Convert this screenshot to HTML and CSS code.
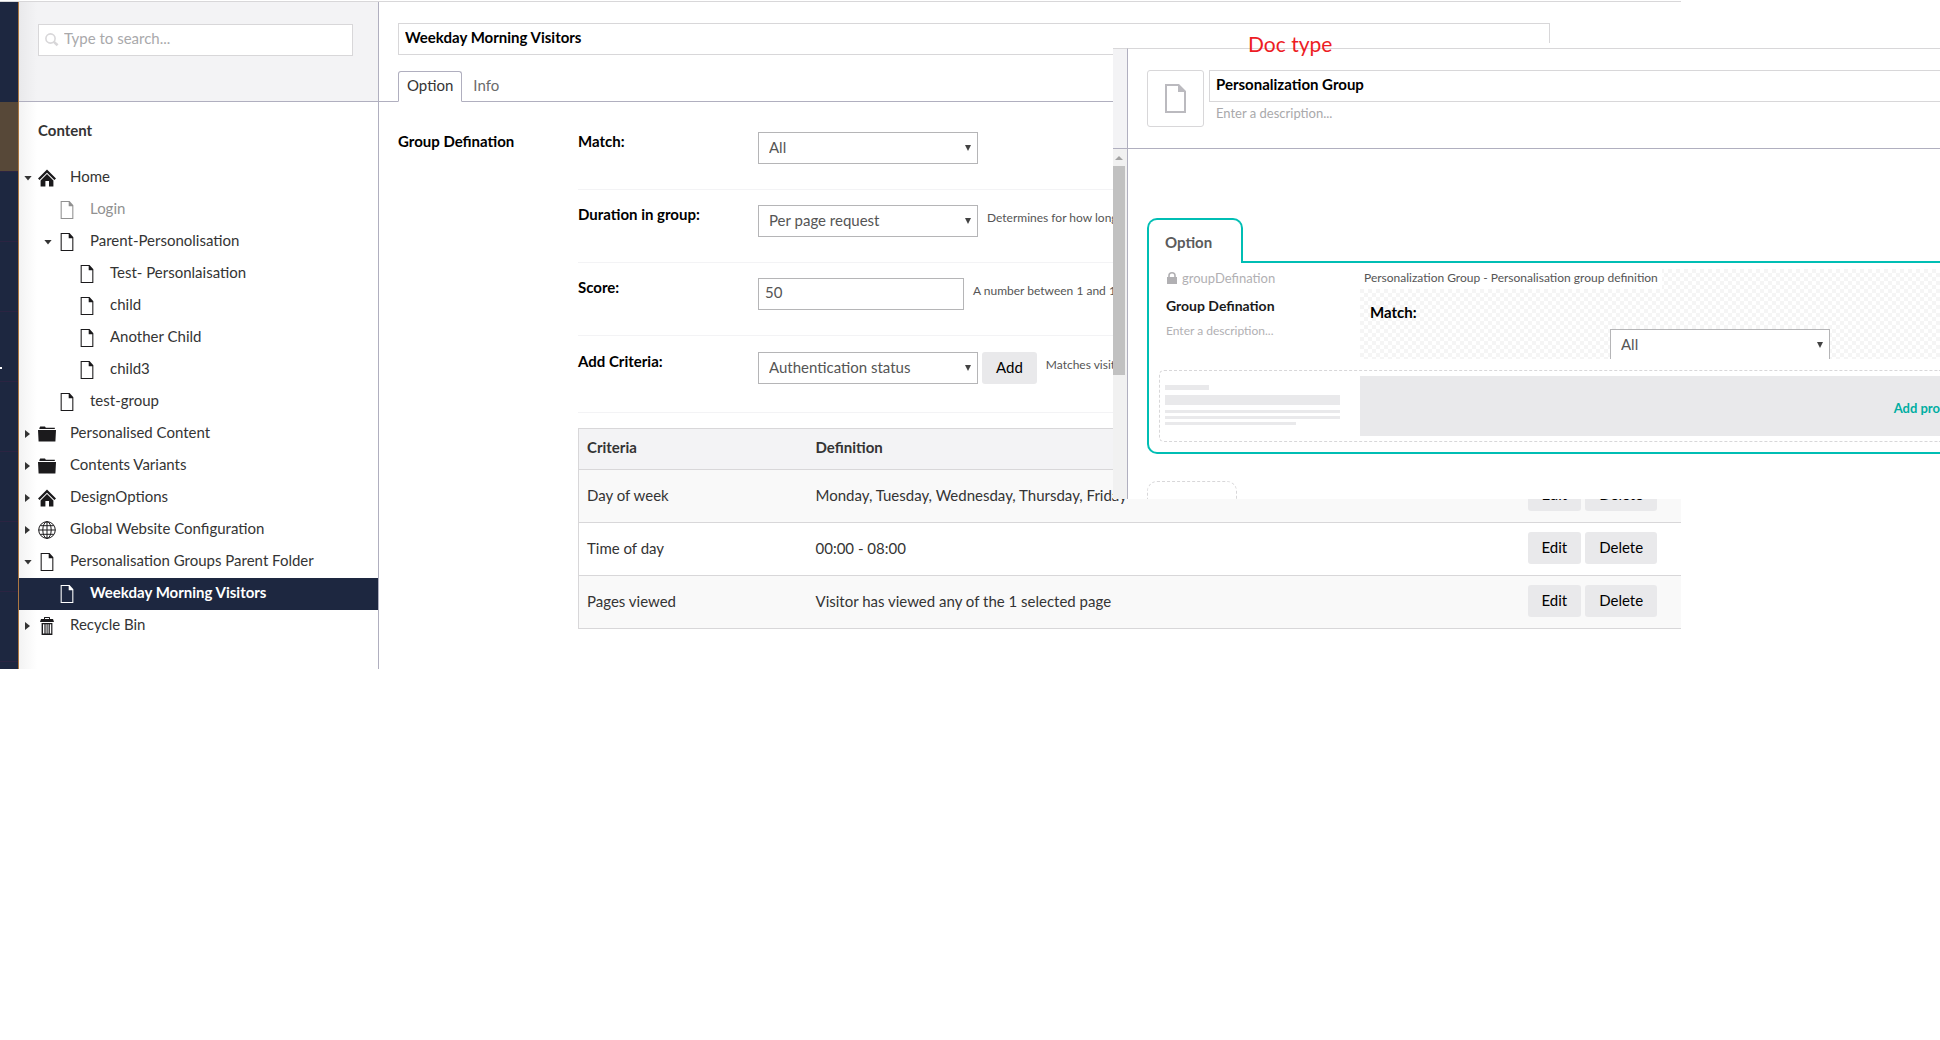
FILE: index.html
```
<!DOCTYPE html>
<html lang="en">
  <head>
    <meta charset="UTF-8" />
    <title>Weekday Morning Visitors</title>
    <link rel="stylesheet" href="styles.css">
  </head>
  <body>
    <svg class="sprite" aria-hidden="true">
      <symbol id="icon-home" viewBox="0 0 18 17">
        <path d="M9 0 L18 9 L16.4 10.4 L9 3.2 L1.6 10.4 L0 9 Z M9 4.6 L15.4 11 V17 H11 V11.6 H7.4 V17 H2.6 V11 Z" />
      </symbol>
      <symbol id="icon-doc" viewBox="0 0 12 17">
        <path d="M0 0 H8.4 L12 4 V17 H0 Z M1 1 V16 H11 V5 H7.6 V1 Z" fill-rule="evenodd" />
      </symbol>
      <symbol id="icon-folder" viewBox="0 0 18 15">
        <path d="M1.4 1.6 L2.2 0 H7 L7.8 1.2 H16.8 V2.6 H1.4 Z M0 3.6 H18 L17.4 15 H.6 Z" />
      </symbol>
      <symbol id="icon-globe" viewBox="0 0 18 18">
        <g fill="none" stroke="currentColor">
          <circle cx="9" cy="9" r="8.3" />
          <ellipse cx="9" cy="9" rx="4.2" ry="8.3" />
          <path d="M9 .7V17.3M.7 9H17.3M2.2 4.7H15.8M2.2 13.3H15.8" />
        </g>
      </symbol>
      <symbol id="icon-trash" viewBox="0 0 14 18">
        <path d="M4 2 V.6 Q4 0 4.6 0 H9.4 Q10 0 10 .6 V2 H13 L14 5 H0 L1 2 Z M5 2 H9 V1 H5 Z M1.6 6 H12.4 V18 H1.6 Z M3 7.2 V16.4 H4.4 V7.2 Z M5.6 7.2 V16.4 H6.6 V7.2 Z M7.6 7.2 V16.4 H8.6 V7.2 Z M9.8 7.2 V16.4 H11.2 V7.2 Z" fill-rule="evenodd" />
      </symbol>
      <symbol id="icon-search" viewBox="0 0 14 14">
        <circle cx="5.5" cy="5.5" r="4.6" fill="none" stroke="currentColor" stroke-width="1.6" />
        <path d="M8.6 8.6 L12.6 12.2" stroke="currentColor" stroke-width="2.6" />
      </symbol>
      <symbol id="icon-lock" viewBox="0 0 10 12">
        <path d="M0 5 H1.2 V3.6 Q1.2 0 5 0 Q8.8 0 8.8 3.6 V5 H10 V12 H0 Z M2.8 5 H7.2 V3.6 Q7.2 1.4 5 1.4 Q2.8 1.4 2.8 3.6 Z" fill-rule="evenodd" />
      </symbol>
      <symbol id="icon-bigdoc" viewBox="0 0 21 29">
        <path d="M0 0 H14 L21 7 V29 H0 Z M2 2 V27 H19 V8 H13 V2 Z" fill-rule="evenodd" />
      </symbol>
    </svg>

    <div class="app">
      <nav class="rail">
        <span class="rail-top"></span>
        <span class="rail-item active"></span>
        <span class="rail-item"></span>
        <span class="rail-item"></span>
        <span class="rail-item"><i class="rail-mark"></i></span>
        <span class="rail-item"></span>
        <span class="rail-item"></span>
        <span class="rail-item"></span>
        <span class="rail-item"></span>
      </nav>

      <aside class="sidebar">
        <div class="sidebar-head">
          <label class="search">
            <svg class="search-icon"><use href="#icon-search" /></svg>
            <input type="text" placeholder="Type to search..." aria-label="Search" />
          </label>
        </div>
        <h5 class="tree-title">Content</h5>
        <ul class="tree">
          <li class="node"><i class="caret open"></i><svg class="icon"><use href="#icon-home" /></svg><a href="#">Home</a></li>
          <li class="node level-2 unpublished"><i class="caret none"></i><svg class="icon"><use href="#icon-doc" /></svg><a href="#">Login</a></li>
          <li class="node level-2"><i class="caret open"></i><svg class="icon"><use href="#icon-doc" /></svg><a href="#">Parent-Personolisation</a></li>
          <li class="node level-3"><i class="caret none"></i><svg class="icon"><use href="#icon-doc" /></svg><a href="#">Test- Personlaisation</a></li>
          <li class="node level-3"><i class="caret none"></i><svg class="icon"><use href="#icon-doc" /></svg><a href="#">child</a></li>
          <li class="node level-3"><i class="caret none"></i><svg class="icon"><use href="#icon-doc" /></svg><a href="#">Another Child</a></li>
          <li class="node level-3"><i class="caret none"></i><svg class="icon"><use href="#icon-doc" /></svg><a href="#">child3</a></li>
          <li class="node level-2"><i class="caret none"></i><svg class="icon"><use href="#icon-doc" /></svg><a href="#">test-group</a></li>
          <li class="node"><i class="caret"></i><svg class="icon"><use href="#icon-folder" /></svg><a href="#">Personalised Content</a></li>
          <li class="node"><i class="caret"></i><svg class="icon"><use href="#icon-folder" /></svg><a href="#">Contents Variants</a></li>
          <li class="node"><i class="caret"></i><svg class="icon"><use href="#icon-home" /></svg><a href="#">DesignOptions</a></li>
          <li class="node"><i class="caret"></i><svg class="icon"><use href="#icon-globe" /></svg><a href="#">Global Website Configuration</a></li>
          <li class="node"><i class="caret open"></i><svg class="icon"><use href="#icon-doc" /></svg><a href="#">Personalisation Groups Parent Folder</a></li>
          <li class="node level-2 current"><i class="caret none"></i><svg class="icon"><use href="#icon-doc" /></svg><a href="#">Weekday Morning Visitors</a></li>
          <li class="node"><i class="caret"></i><svg class="icon"><use href="#icon-trash" /></svg><a href="#">Recycle Bin</a></li>
        </ul>
      </aside>

      <main class="editor">
        <div class="editor-head">
          <input class="name-input" type="text" value="Weekday Morning Visitors" aria-label="Name" />
          <div class="tabs">
            <a class="tab active" href="#">Option</a>
            <a class="tab" href="#">Info</a>
          </div>
        </div>

        <div class="property">
          <h5 class="property-title">Group Defination</h5>
          <div class="property-body">
            <div class="field">
              <label class="field-label" for="match">Match:</label>
              <div class="select"><select id="match"><option>All</option></select></div>
            </div>
            <div class="field">
              <label class="field-label" for="duration">Duration in group:</label>
              <div class="select"><select id="duration"><option>Per page request</option></select></div>
              <span class="help">Determines for how long</span>
            </div>
            <div class="field">
              <label class="field-label" for="score">Score:</label>
              <input class="score" id="score" type="text" value="50" />
              <span class="help">A number between 1 and 100</span>
            </div>
            <div class="field last">
              <label class="field-label" for="criteria">Add Criteria:</label>
              <div class="select"><select id="criteria"><option>Authentication status</option></select></div>
              <button class="btn add" type="button">Add</button>
              <span class="help">Matches visitor</span>
            </div>

            <table class="criteria">
              <thead>
                <tr><th class="col-name">Criteria</th><th>Definition</th><th class="col-actions"></th></tr>
              </thead>
              <tbody>
                <tr>
                  <td>Day of week</td>
                  <td>Monday, Tuesday, Wednesday, Thursday, Friday</td>
                  <td><div class="actions"><button class="btn" type="button">Edit</button><button class="btn" type="button">Delete</button></div></td>
                </tr>
                <tr>
                  <td>Time of day</td>
                  <td>00:00 - 08:00</td>
                  <td><div class="actions"><button class="btn" type="button">Edit</button><button class="btn" type="button">Delete</button></div></td>
                </tr>
                <tr>
                  <td>Pages viewed</td>
                  <td>Visitor has viewed any of the 1 selected page</td>
                  <td><div class="actions"><button class="btn" type="button">Edit</button><button class="btn" type="button">Delete</button></div></td>
                </tr>
              </tbody>
            </table>
          </div>
        </div>
      </main>
    </div>

    <!-- document type window, lies over the editor -->
    <section class="doctype">
      <div class="doctype-side">
        <div class="side-head"></div>
        <div class="scrollbar">
          <i class="scroll-up"></i>
          <i class="scroll-thumb"></i>
        </div>
      </div>
      <div class="doctype-main">
        <div class="doctype-head">
          <button class="doctype-icon" type="button" aria-label="Choose icon"><svg><use href="#icon-bigdoc" /></svg></button>
          <div class="doctype-names">
            <input class="name-input" type="text" value="Personalization Group" aria-label="Document type name" />
            <input class="desc" type="text" placeholder="Enter a description..." aria-label="Description" />
          </div>
        </div>

        <div class="groups">
          <div class="group-tab">Option</div>
          <div class="group">
            <div class="group-row">
              <div class="meta">
                <span class="alias"><svg><use href="#icon-lock" /></svg>groupDefination</span>
                <strong class="meta-name">Group Defination</strong>
                <span class="meta-desc">Enter a description...</span>
              </div>
              <div class="preview">
                <span class="preview-label">Personalization Group - Personalisation group definition</span>
                <div class="preview-field">
                  <label for="preview-match">Match:</label>
                  <div class="select"><select id="preview-match"><option>All</option></select></div>
                </div>
              </div>
            </div>
            <div class="placeholder">
              <div class="bars">
                <i class="bar short"></i>
                <i class="bar thick"></i>
                <i class="bar"></i>
                <i class="bar"></i>
                <i class="bar medium"></i>
              </div>
              <button class="add-property" type="button">Add pro</button>
            </div>
          </div>
          <div class="new-tab"></div>
        </div>
      </div>
    </section>
    <div class="note">Doc type</div>
  </body>
</html>
```
FILE: styles.css
```
* {
    box-sizing: border-box;
}

body {
    margin: 0;
    font-family: Lato, "Liberation Sans", sans-serif;
    font-size: 15px;
    line-height: 18px;
    color: #343434;
    background-color: #fff;
    overflow-x: hidden;
}

input, select, button {
    font-family: inherit;
    font-size: 15px;
    margin: 0;
    border-radius: 0;
}

h5 {
    margin: 0;
    font-size: 15px;
}

svg {
    fill: currentColor;
}

.sprite {
    display: none;
}

.app {
    display: flex;
    margin: 1px 259px 0 0;
    border-top: 1px solid #d8d7d9;
    overflow: hidden;
}

/* dark section bar */
.rail {
    width: 19px;
    height: 667px;
    flex: none;
    overflow: hidden;
    background-color: #1d2740;
    border-right: 1px solid #ab7742;
}

.rail-top {
    display: block;
    height: 100px;
}

.rail-item {
    display: flex;
    align-items: center;
    height: 70px;
    border-bottom: 1px solid #2b2442;
}

.rail-item.active {
    background-color: #574838;
}

.rail-mark {
    width: 2px;
    height: 2px;
    margin-top: 42px;
    background-color: #fff;
}

/* content tree */
.sidebar {
    width: 360px;
    flex: none;
    border-right: 1px solid #b0afbf;
    background-image: linear-gradient(to right, #f3f3f3, #fff 18px);
}

.sidebar-head {
    height: 100px;
    padding: 22px 25px 0 19px;
    border-bottom: 1px solid #b0afbf;
    background-image: linear-gradient(to right, #e9e9eb, #f3f3f5 18px);
}

.search {
    display: flex;
    align-items: center;
    height: 32px;
    padding-left: 6px;
    border: 1px solid #d8d7d9;
    background-color: #fff;
}

.search-icon {
    width: 14px;
    height: 14px;
    color: #d8d7d9;
}

.search input {
    flex: 1;
    padding: 0 5px 4px;
    border: none;
    outline: none;
}

input::placeholder {
    color: #a9a9ab;
    opacity: 1;
}

.tree-title {
    padding: 19px 19px 23px;
}

.tree {
    margin: 0;
    padding: 0;
    list-style: none;
}

.node {
    display: flex;
    align-items: center;
    height: 32px;
    padding-left: 5px;
}

.node a {
    padding-bottom: 4px;
    color: inherit;
    text-decoration: none;
}

.level-2 {
    padding-left: 25px;
}

.level-3 {
    padding-left: 45px;
}

.caret {
    width: 8px;
    height: 5px;
    margin-right: 6px;
    background-color: #343434;
    clip-path: polygon(0 0, 100% 0, 50% 100%);
}

.caret:not(.open) {
    width: 5px;
    height: 8px;
    margin: 0 8px 0 1px;
    clip-path: polygon(0 0, 100% 50%, 0 100%);
}

.caret.none {
    background: none;
}

.icon {
    width: 18px;
    height: 18px;
    margin-right: 14px;
    color: #1b1a1c;
}

.unpublished {
    color: #919191;
}

.unpublished .icon {
    color: #919191;
}

.current {
    background-color: #1d2740;
    color: #fff;
    font-weight: bold;
}

.current .icon {
    color: #fff;
}

/* editor */
.editor {
    flex: 1;
    min-width: 0;
}

.editor-head {
    height: 100px;
    padding: 21px 131px 0 19px;
    border-bottom: 1px solid #b0afbf;
}

.name-input {
    display: block;
    width: 100%;
    height: 32px;
    padding: 0 6px 4px;
    border: 1px solid #d8d7d9;
    background-color: #fff;
    color: #000;
    font-weight: bold;
    outline: none;
}

.tabs {
    display: flex;
    margin-top: 16px;
}

.tab {
    height: 31px;
    padding: 4px 8px 0;
    border: 1px solid transparent;
    color: #6b6b6b;
    text-decoration: none;
}

.tab.active {
    margin-right: 2px;
    border-color: #b0afbf;
    border-bottom-color: #fff;
    border-radius: 3px 3px 0 0;
    background-color: #fff;
    color: #343434;
}

.property {
    display: flex;
    padding: 30px 0 0 19px;
}

.property-title {
    width: 180px;
    flex: none;
    color: #000;
}

.property-body {
    flex: 1;
    min-width: 0;
}

.field {
    display: flex;
    height: 58px;
    margin-bottom: 15px;
    border-bottom: 1px solid #f3f3f5;
}

.field.last {
    height: 62px;
    padding-top: 1px;
}

.field-label {
    width: 180px;
    color: #000;
    font-weight: bold;
}

.select {
    display: grid;
    width: 220px;
    height: 32px;
    align-items: center;
}

.select select,
.select::after {
    grid-area: 1 / 1;
}

.select select {
    width: 100%;
    height: 32px;
    padding: 0 10px 2px;
    border: 1px solid #b5b5b7;
    background-color: #fff;
    color: #555;
    appearance: none;
}

.select::after {
    content: "";
    justify-self: end;
    width: 6px;
    height: 6px;
    margin-right: 7px;
    background-color: #434343;
    clip-path: polygon(0 0, 100% 0, 50% 100%);
    pointer-events: none;
}

.score {
    width: 206px;
    height: 32px;
    padding: 0 6px 4px;
    border: 1px solid #b5b5b7;
    color: #555;
}

.help {
    padding: 4px 0 0 9px;
    font-size: 12px;
    color: #555;
    white-space: nowrap;
}

.btn {
    height: 32px;
    padding: 0 14px 2px;
    border: none;
    border-radius: 3px;
    background-color: #e9e9eb;
    color: #000;
    cursor: pointer;
}

.btn.add {
    margin-left: 4px;
}

.criteria {
    width: calc(100% + 2px);
    border: 1px solid #d8d7d9;
    border-collapse: collapse;
    table-layout: fixed;
}

.criteria th {
    height: 41px;
    padding: 0 8px 4px;
    background-color: #f3f3f5;
    text-align: left;
}

.criteria td {
    height: 53px;
    padding: 0 8px 2px;
    border-top: 1px solid #d8d7d9;
}

.criteria tbody tr:nth-child(odd) {
    background-color: #f9f9f9;
}

.criteria .col-name {
    width: 229px;
}

.criteria .col-actions {
    width: 163px;
}

.actions {
    display: flex;
    gap: 4px;
}

/* document type window */
.doctype {
    position: absolute;
    top: 43px;
    left: 1113px;
    right: 0;
    display: flex;
    height: 456px;
    padding-top: 5px;
    overflow: hidden;
    background-color: #fff;
}

.doctype-side {
    display: flex;
    flex-direction: column;
    width: 15px;
    flex: none;
    border-top: 1px solid #d8d7d9;
    border-right: 1px solid #b0afbf;
}

.side-head {
    height: 100px;
    background-color: #f3f3f5;
    border-bottom: 1px solid #b0afbf;
}

.scrollbar {
    flex: 1;
    background-color: #f1f1f1;
}

.scroll-up {
    display: block;
    width: 8px;
    height: 4px;
    margin: 7px 2px 6px;
    background-color: #a3a3a3;
    clip-path: polygon(50% 0, 100% 100%, 0 100%);
}

.scroll-thumb {
    display: block;
    width: 12px;
    height: 209px;
    background-color: #c1c1c1;
}

.doctype-main {
    flex: 1;
    min-width: 0;
    border-top: 1px solid #d8d7d9;
}

.doctype-head {
    display: flex;
    gap: 5px;
    height: 100px;
    padding: 21px 0 0 19px;
    border-bottom: 1px solid #b0afbf;
}

.doctype-icon {
    display: flex;
    align-items: center;
    justify-content: center;
    width: 57px;
    height: 57px;
    border: 1px solid #d8d7d9;
    border-radius: 3px;
    background-color: #fff;
    color: #bbbabf;
}

.doctype-icon svg {
    width: 21px;
    height: 29px;
}

.doctype-names {
    flex: 1;
}

.doctype .name-input {
    border-right: none;
}

.desc {
    width: 100%;
    height: 22px;
    padding: 0 7px;
    border: none;
    font-size: 13px;
    outline: none;
}

.groups {
    padding: 69px 0 0 19px;
}

.group-tab {
    position: relative;
    width: 96px;
    height: 45px;
    padding: 13px 16px 0;
    border: 2px solid #00beb4;
    border-bottom: none;
    border-radius: 10px 10px 0 0;
    background-color: #fff;
    color: #5b5b5b;
    font-weight: bold;
}

.group {
    height: 193px;
    margin-top: -2px;
    padding: 6px 0 0 10px;
    border: 2px solid #00beb4;
    border-right: none;
    border-radius: 0 0 0 10px;
}

.group-row {
    display: flex;
    height: 90px;
    margin-bottom: 11px;
}

.meta {
    display: flex;
    flex-direction: column;
    width: 201px;
    padding-left: 7px;
    flex: none;
}

.alias {
    display: flex;
    align-items: center;
    gap: 5px;
    color: #b1b0b3;
    font-size: 13px;
}

.alias svg {
    width: 10px;
    height: 12px;
    margin-left: 1px;
}

.meta-name {
    margin-top: 10px;
    color: #1b1a1c;
    font-size: 14px;
}

.meta-desc {
    margin-top: 7px;
    color: #b1b0b3;
    font-size: 12px;
}

.preview {
    flex: 1;
    overflow: hidden;
    background: conic-gradient(#f5f5f5 25%, #fff 0 50%, #f5f5f5 0 75%, #fff 0) 0 0 / 8px 8px;
}

.preview-label {
    display: block;
    width: fit-content;
    padding: 0 4px 2px;
    background-color: #fff;
    color: #555;
    font-size: 12px;
}

.preview-field {
    display: flex;
    padding: 14px 0 0 10px;
}

.preview-field label {
    width: 240px;
    color: #000;
    font-weight: bold;
}

.preview-field .select {
    margin-top: 26px;
}

.placeholder {
    display: flex;
    height: 72px;
    padding: 5px 0 5px 5px;
    border: 1px dashed #d8d7d9;
    border-right: none;
    border-radius: 5px 0 0 5px;
}

.bars {
    width: 195px;
    flex: none;
    padding-top: 9px;
}

.bar {
    display: block;
    width: 175px;
    height: 3px;
    margin-bottom: 3px;
    background-color: #e9e9eb;
}

.bar.short {
    width: 44px;
    height: 5px;
    margin-bottom: 5px;
}

.bar.thick {
    height: 10px;
    margin-bottom: 5px;
}

.bar.medium {
    width: 131px;
}

.add-property {
    flex: 1;
    padding: 4px 0 0;
    border: none;
    overflow: hidden;
    background-color: #e9e9eb;
    color: #00aea2;
    font-size: 13px;
    font-weight: bold;
    text-align: right;
    white-space: nowrap;
}

.new-tab {
    width: 90px;
    height: 45px;
    margin-top: 27px;
    border: 1px dashed #d8d7d9;
    border-radius: 10px 10px 0 0;
}

/* red annotation */
.note {
    position: absolute;
    top: 31px;
    left: 1248px;
    color: #ed1c24;
    font-size: 21px;
    line-height: 26px;
}
```
